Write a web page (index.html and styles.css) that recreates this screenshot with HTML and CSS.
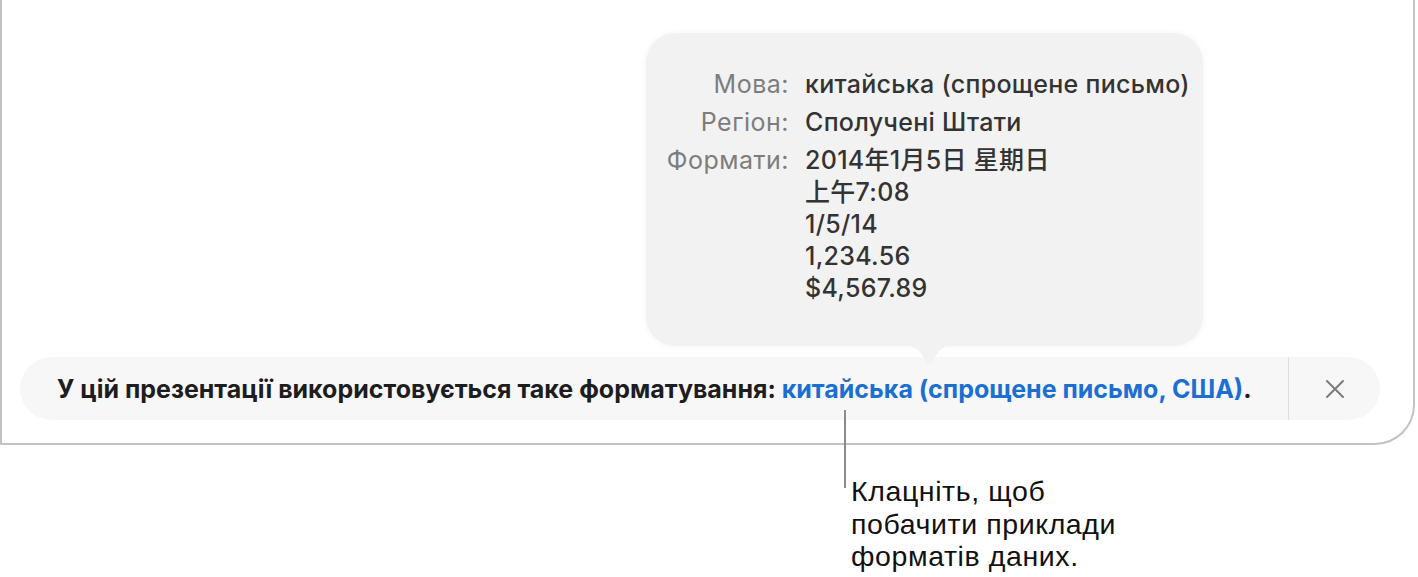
FILE: index.html
```html
<!DOCTYPE html>
<html lang="uk">
<head>
    <meta charset="UTF-8">
    <meta name="viewport" content="width=device-width, initial-scale=1.0">
    <title>Форматування презентації</title>
    <link rel="stylesheet" href="styles.css">
</head>
<body>
    <div class="window">
        <div class="popover">
            <div class="info">
                <span class="label">Мова:</span>
                <span class="value">китайська (спрощене письмо)</span>
                <span class="label">Регіон:</span>
                <span class="value">Сполучені Штати</span>
                <span class="label">Формати:</span>
                <span class="value">
                    <span class="line">2014年1月5日 星期日</span>
                    <span class="line">上午7:08</span>
                    <span class="line">1/5/14</span>
                    <span class="line">1,234.56</span>
                    <span class="line">$4,567.89</span>
                </span>
            </div>
            <svg class="tail" width="56" height="22" viewBox="0 0 56 22">
                <path d="M0 0 C12 0 16 3 21 10 L25 17 Q28 21 31 17 L35 10 C40 3 44 0 56 0 Z" fill="#f2f2f2"/>
            </svg>
        </div>

        <div class="bar">
            <p class="message">У цій презентації використовується таке форматування: <a href="#" class="locale">китайська (спрощене письмо, США)</a>.</p>
            <button class="close" aria-label="Закрити">
                <svg width="20" height="20" viewBox="0 0 20 20">
                    <path d="M2 2 L18 18 M18 2 L2 18" stroke="#7b7b7b" stroke-width="2" stroke-linecap="round"/>
                </svg>
            </button>
        </div>
    </div>

    <div class="callout">
        <div class="leader"></div>
        <p>Клацніть, щоб<br>побачити приклади<br>форматів даних.</p>
    </div>
</body>
</html>
```

FILE: styles.css
```css
body {
    margin: 0;
    background-color: #ffffff;
    font-family: Inter, "Noto Sans CJK SC", sans-serif;
    color: #1d1d1f;
}
.window {
    box-sizing: border-box;
    width: 1415px;
    height: 445px;
    padding-top: 33px;
    border-left: 2px solid #c2c2c2;
    border-right: 2px solid #c2c2c2;
    border-bottom: 2px solid #c2c2c2;
    border-bottom-right-radius: 40px;
}
.popover {
    position: relative;
    box-sizing: border-box;
    width: 557px;
    height: 313px;
    margin-left: 644px;
    padding-top: 35px;
    background: #f2f2f2;
    border-radius: 30px;
    box-shadow: 0 0 6px rgba(0, 0, 0, 0.05);
}
.info {
    display: grid;
    grid-template-columns: 143px auto;
    column-gap: 16px;
    row-gap: 6px;
    font-size: 25px;
    line-height: 32px;
}
.label {
    text-align: right;
    color: #7d7d7d;
    letter-spacing: 0.5px;
}
.value {
    color: #333333;
    font-weight: 500;
    letter-spacing: 0.3px;
}
.line {
    display: block;
}
.tail {
    position: absolute;
    left: 255px;
    bottom: -21px;
}
.bar {
    display: flex;
    align-items: center;
    width: 1360px;
    height: 63px;
    margin: 11px 0 0 18px;
    background: #f7f7f7;
    border-radius: 32px;
}
.message {
    flex-grow: 1;
    margin: 0;
    padding-left: 37px;
    font-size: 25px;
    font-weight: 700;
    color: #1d1d1f;
}
.locale {
    color: #1b6fd3;
    text-decoration: none;
}
.close {
    display: flex;
    align-items: center;
    justify-content: center;
    width: 92px;
    height: 100%;
    padding: 0;
    background: none;
    border: none;
    border-left: 1px solid #dedede;
    cursor: pointer;
}
.callout {
    position: relative;
    margin-left: 851px;
}
.leader {
    position: absolute;
    left: -7px;
    top: -35px;
    width: 2px;
    height: 78px;
    background: #8a8a8a;
}
.callout p {
    margin: 0;
    padding-top: 30px;
    font-family: "Liberation Sans", Arial, sans-serif;
    font-size: 28.5px;
    letter-spacing: 0.6px;
    line-height: 32.5px;
    color: #111111;
}
```
